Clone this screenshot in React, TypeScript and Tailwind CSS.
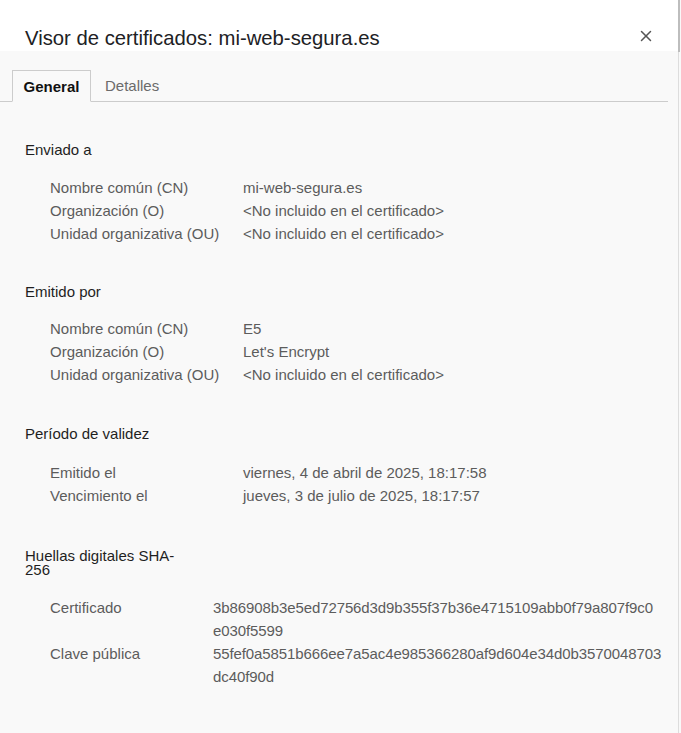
import { X } from 'lucide-react';

type Row = { label: string; value: string[] };

const font = { fontFamily: '"Liberation Sans", Arial, sans-serif' };

function Section({ title, rows, labelWidth = 'w-[193px]', titleClass = '', valueClass = '' }: {
  title: string;
  rows: Row[];
  labelWidth?: string;
  titleClass?: string;
  valueClass?: string;
}) {
  return (
    <section className="flex flex-col">
      <h2 className={`text-[15px] text-[#1f1f1f] ${titleClass}`}>{title}</h2>
      <div className="flex flex-col pl-[25px]">
        {rows.map((r) => (
          <div key={r.label} className="flex text-[15px] leading-[23px] text-[#5c5c5c]">
            <span className={`${labelWidth} shrink-0`}>{r.label}</span>
            <span className={`flex flex-col ${valueClass}`}>
              {r.value.map((line) => (
                <span key={line}>{line}</span>
              ))}
            </span>
          </div>
        ))}
      </div>
    </section>
  );
}

export default function App() {
  return (
    <div className="w-[681px] h-[733px] flex bg-[#f9f9f9] overflow-hidden" style={font}>
      <div className="flex-1 flex flex-col">
        <header className="h-[51px] bg-white flex items-end justify-between pl-[25px] pr-[23px]">
          <h1 className="text-[20.3px] leading-[26px] text-[#202124]">Visor de certificados: mi-web-segura.es</h1>
          <X className="w-[18px] h-[18px] text-[#555] mb-[6px]" strokeWidth={2} />
        </header>

        <nav className="mt-[19px] flex border-b border-[#cccccc] pl-[12px] h-[32px] mr-[10px]">
          <div className="w-[79px] -mb-px bg-[#f9f9f9] border border-[#cccccc] border-b-[#f9f9f9] flex items-center justify-center pt-[2px] text-[15px] font-bold text-[#111]">
            General
          </div>
          <div className="px-[14px] flex items-center pt-[2px] text-[15px] text-[#6b6b6b]">Detalles</div>
        </nav>

        <main className="flex flex-col pl-[25px] pt-[36px]">
          <Section
            title="Enviado a"
            titleClass="leading-[23px] mb-[15px]"
            rows={[
              { label: 'Nombre común (CN)', value: ['mi-web-segura.es'] },
              { label: 'Organización (O)', value: ['<No incluido en el certificado>'] },
              { label: 'Unidad organizativa (OU)', value: ['<No incluido en el certificado>'] },
            ]}
          />
          <div className="h-[35px]" />
          <Section
            title="Emitido por"
            titleClass="leading-[23px] mb-[14px]"
            rows={[
              { label: 'Nombre común (CN)', value: ['E5'] },
              { label: 'Organización (O)', value: ["Let's Encrypt"] },
              { label: 'Unidad organizativa (OU)', value: ['<No incluido en el certificado>'] },
            ]}
          />
          <div className="h-[36px]" />
          <Section
            title="Período de validez"
            titleClass="leading-[23px] mb-[16px]"
            rows={[
              { label: 'Emitido el', value: ['viernes, 4 de abril de 2025, 18:17:58'] },
              { label: 'Vencimiento el', value: ['jueves, 3 de julio de 2025, 18:17:57'] },
            ]}
          />
          <div className="h-[42px]" />
          <Section
            title="Huellas digitales SHA-256"
            titleClass="leading-[14px] w-[160px] mb-[19px]"
            labelWidth="w-[163px]"
            valueClass="tracking-[-0.1px]"
            rows={[
              {
                label: 'Certificado',
                value: ['3b86908b3e5ed72756d3d9b355f37b36e4715109abb0f79a807f9c0', 'e030f5599'],
              },
              {
                label: 'Clave pública',
                value: ['55fef0a5851b666ee7a5ac4e985366280af9d604e34d0b3570048703', 'dc40f90d'],
              },
            ]}
          />
        </main>
      </div>
      <div className="w-[3px] flex flex-col">
        <div className="h-[52px] w-[2px] bg-[#bdbdbd]" />
        <div className="flex-1 w-[1px] bg-[#dddddd]" />
      </div>
    </div>
  );
}
